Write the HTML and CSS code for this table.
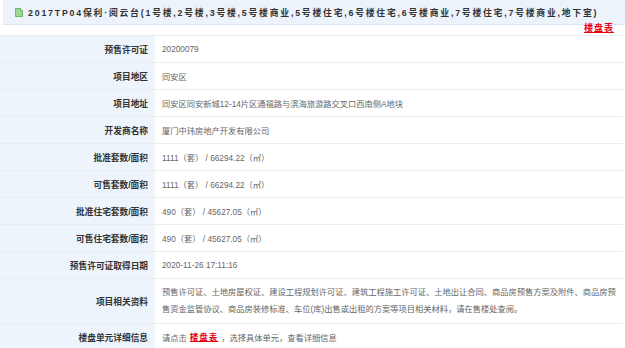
FILE: index.html
```html
<!DOCTYPE html>
<html lang="zh">
<head>
<meta charset="utf-8">
<link rel="stylesheet" href="styles.css">
</head>
<body>
<div class="page">
  <div class="header">
    <svg class="doc-icon" width="8" height="9" viewBox="0 0 8 9"><path d="M0.5 0.5h5l2 2v6h-7z" fill="#9fd69a" stroke="#6fb96a" stroke-width="1"/><path d="M5.5 0.5v2h2" fill="#dff2dc" stroke="#6fb96a" stroke-width="1"/></svg>
    <span class="title">2017TP04保利·阅云台(1号楼,2号楼,3号楼,5号楼商业,5号楼住宅,6号楼住宅,6号楼商业,7号楼住宅,7号楼商业,地下室)</span>
  </div>
  <div class="link-bar"><a class="red-link" href="#">楼盘表</a></div>
  <div class="table">
    <div class="row"><div class="label">预售许可证</div><div class="value">20200079</div></div>
    <div class="row"><div class="label">项目地区</div><div class="value">同安区</div></div>
    <div class="row"><div class="label">项目地址</div><div class="value">同安区同安新城12-14片区通福路与滨海旅游路交叉口西南侧A地块</div></div>
    <div class="row"><div class="label">开发商名称</div><div class="value">厦门中玮房地产开发有限公司</div></div>
    <div class="row"><div class="label">批准套数/面积</div><div class="value">1111（套） / 66294.22（㎡）</div></div>
    <div class="row"><div class="label">可售套数/面积</div><div class="value">1111（套） / 66294.22（㎡）</div></div>
    <div class="row"><div class="label">批准住宅套数/面积</div><div class="value">490（套） / 45627.05（㎡）</div></div>
    <div class="row"><div class="label">可售住宅套数/面积</div><div class="value">490（套） / 45627.05（㎡）</div></div>
    <div class="row"><div class="label">预售许可证取得日期</div><div class="value">2020-11-26 17:11:16</div></div>
    <div class="row tall"><div class="label">项目相关资料</div><div class="value multi">预售许可证、土地房屋权证、建设工程规划许可证、建筑工程施工许可证、土地出让合同、商品房预售方案及附件、商品房预售资金监管协议、商品房装修标准、车位(库)出售或出租的方案等项目相关材料，请在售楼处查阅。</div></div>
    <div class="row"><div class="label">楼盘单元详细信息</div><div class="value">请点击 <a class="red-link" href="#">楼盘表</a> ，选择具体单元，查看详细信息</div></div>
  </div>
</div>
</body>
</html>
```
FILE: styles.css
```css
html, body {
  margin: 0;
  padding: 0;
  background: #ffffff;
}
body {
  font-family: "Liberation Sans", "Noto Sans CJK SC", sans-serif;
}
.page {
  width: 625px;
}
.header {
  margin-left: 3px;
  height: 25px;
  background: #edf3fb;
  border-bottom: 1px solid #d9e5f3;
  display: flex;
  align-items: center;
  padding-left: 12px;
  box-sizing: border-box;
}
.doc-icon {
  flex: none;
  margin-right: 5px;
}
.title {
  font-size: 8.8px;
  font-weight: bold;
  letter-spacing: 1.8px;
  color: #333333;
  white-space: nowrap;
}
.link-bar {
  height: 12px;
  display: flex;
  justify-content: flex-end;
  padding-right: 11px;
  margin-top: -2px;
}
.red-link {
  color: #e60012;
  font-weight: bold;
  font-size: 9px;
  letter-spacing: 1px;
  text-decoration: underline;
  line-height: 11px;
}
.table {
  border-top: 1px solid #ececec;
  width: 623px;
}
.row {
  display: flex;
  border-bottom: 1px solid #ececec;
  min-height: 26px;
}
.label {
  width: 155px;
  flex: none;
  background: #eef4fb;
  box-sizing: border-box;
  padding-right: 7px;
  text-align: right;
  font-size: 8.7px;
  font-weight: bold;
  color: #333333;
  display: flex;
  align-items: center;
  justify-content: flex-end;
}
.value {
  flex: 1;
  padding-left: 7px;
  font-size: 8.25px;
  color: #666666;
  display: flex;
  align-items: center;
}
.value .red-link {
  font-size: 8.5px;
  margin: 0 3px;
}
.value.multi {
  display: block;
  padding-top: 5px;
  padding-bottom: 5px;
  padding-right: 6px;
  line-height: 17px;
}
.tall {
  min-height: 42px;
}
```
